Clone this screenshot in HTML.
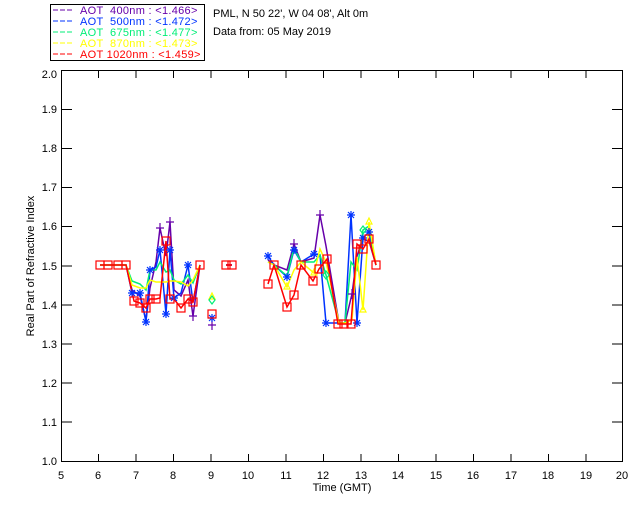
<!DOCTYPE html>
<html><head><meta charset="utf-8"><style>
html,body{margin:0;padding:0;background:#fff;}
svg{display:block;font-family:"Liberation Sans",sans-serif;}
.lg{white-space:pre;letter-spacing:0.3px;}
</style></head><body>
<svg width="640" height="512" viewBox="0 0 640 512" xmlns="http://www.w3.org/2000/svg">
<defs>
<g id="ast"><path d="M-4 0h8M0-4v8M-3-3l6 6M-3 3l6-6" stroke="#0033ff" stroke-width="1.2" fill="none"/></g>
<g id="pl"><path d="M-4 0h8M0-5v10" stroke="#6600aa" stroke-width="1.2" fill="none"/></g>
</defs>
<rect width="640" height="512" fill="#fff"/>
<rect x="50.5" y="4.5" width="154" height="56" fill="none" stroke="#000"/>
<g font-size="11" class="lg">
<line x1="53" y1="10" x2="73" y2="10" stroke="#6600aa" stroke-dasharray="5,2"/>
<text x="80" y="14" fill="#6600aa" xml:space="preserve">AOT  400nm : &lt;1.466&gt;</text>
<line x1="53" y1="21" x2="73" y2="21" stroke="#0033ff" stroke-dasharray="5,2"/>
<text x="80" y="25" fill="#0033ff" xml:space="preserve">AOT  500nm : &lt;1.472&gt;</text>
<line x1="53" y1="32" x2="73" y2="32" stroke="#00ee77" stroke-dasharray="5,2"/>
<text x="80" y="36" fill="#00ee77" xml:space="preserve">AOT  675nm : &lt;1.477&gt;</text>
<line x1="53" y1="43" x2="73" y2="43" stroke="#ffff00" stroke-dasharray="5,2"/>
<text x="80" y="47" fill="#ffff00" xml:space="preserve">AOT  870nm : &lt;1.473&gt;</text>
<line x1="53" y1="54" x2="73" y2="54" stroke="#ff0000" stroke-dasharray="5,2"/>
<text x="80" y="58" fill="#ff0000" xml:space="preserve">AOT 1020nm : &lt;1.459&gt;</text>
</g>
<text x="213" y="17" font-size="11">PML, N 50 22', W 04 08', Alt 0m</text>
<text x="213" y="35" font-size="11">Data from: 05 May 2019</text>
<rect x="61.5" y="70.5" width="561" height="391" fill="none" stroke="#000"/>
<g stroke="#000">
<path d="M98.5 461v-7M136 461v-7M173.5 461v-7M211 461v-7M248.5 461v-7M286 461v-7M323.5 461v-7M361 461v-7M398.5 461v-7M436 461v-7M473.5 461v-7M511 461v-7M548.5 461v-7M586 461v-7
M98.5 71v7M136 71v7M173.5 71v7M211 71v7M248.5 71v7M286 71v7M323.5 71v7M361 71v7M398.5 71v7M436 71v7M473.5 71v7M511 71v7M548.5 71v7M586 71v7
M62 109.5h10M62 148.5h10M62 187.5h10M62 226.5h10M62 266h10M62 305h10M62 344h10M62 383h10M62 422h10
M622 109.5h-10M622 148.5h-10M622 187.5h-10M622 226.5h-10M622 266h-10M622 305h-10M622 344h-10M622 383h-10M622 422h-10"/>
</g>
<g font-size="11" text-anchor="middle">
<text x="61" y="479">5</text><text x="98" y="479">6</text><text x="136" y="479">7</text><text x="173" y="479">8</text><text x="211" y="479">9</text><text x="248" y="479">10</text><text x="286" y="479">11</text><text x="323" y="479">12</text><text x="361" y="479">13</text><text x="398" y="479">14</text><text x="436" y="479">15</text><text x="473" y="479">16</text><text x="511" y="479">17</text><text x="548" y="479">18</text><text x="586" y="479">19</text><text x="622" y="479">20</text>
</g>
<g font-size="11" text-anchor="end">
<text x="57" y="78">2.0</text><text x="57" y="113">1.9</text><text x="57" y="152">1.8</text><text x="57" y="191">1.7</text><text x="57" y="230">1.6</text><text x="57" y="270">1.5</text><text x="57" y="309">1.4</text><text x="57" y="348">1.3</text><text x="57" y="387">1.2</text><text x="57" y="426">1.1</text><text x="57" y="465">1.0</text>
</g>
<text x="342" y="491" font-size="11" text-anchor="middle">Time (GMT)</text>
<text transform="translate(34,266) rotate(-90)" font-size="11" text-anchor="middle">Real Part of Refractive Index</text>
<g fill="none" stroke-width="1.5">
<polyline stroke="#6600aa" points="100,265 108,265 118,265 126,265 132,290 140,296 146,320 150,288 156,262 160,228 166,256 170,222 174,290 181,296 188,280 193,316 200,265"/>
<polyline stroke="#6600aa" points="226,265 232,265"/>
<polyline stroke="#6600aa" points="268,260 274,265 287,270 294,244 301,262 314,258 320,215 326,246 339,323 345,323 352,294 357,256 363,239 369,241 376,265"/>
<polyline stroke="#0033ff" points="100,265 108,265 118,265 126,265 132,293 140,293 146,322 150,270 156,267 160,250 166,314 170,250 174,298 181,293 188,265 193,302 200,265"/>
<polyline stroke="#0033ff" points="226,265 232,265"/>
<polyline stroke="#0033ff" points="268,256 274,265 287,277 294,250 301,262 314,254 320,255 326,323 339,323 345,323 351,215 357,323 363,238 369,232 376,265"/>
<polyline stroke="#00ee77" points="100,265 108,265 118,265 126,265 132,281 140,284 146,290 150,270 156,270 160,262 166,272 170,270 174,280 181,284 188,275 193,283 200,265"/>
<polyline stroke="#00ee77" points="268,262 274,265 287,276 294,248 301,262 314,262 320,255 326,275 339,323 345,323 351,262 357,270 363,230 369,226 376,265"/>
<polyline stroke="#ffff00" points="100,265 108,265 118,265 126,265 132,285 140,288 146,288 150,280 156,282 160,282 166,282 170,281 174,281 181,282 188,286 193,280 200,265"/>
<polyline stroke="#ffff00" points="268,262 274,265 287,287 294,270 301,262 314,273 320,249 326,262 339,323 345,323 352,320 357,257 363,310 369,222 376,265"/>
<polyline stroke="#ff0000" points="100,265 108,265 118,265 126,265 134,301 140,303 146,308 150,299 156,299 160,298 166,241 170,299 174,299 181,308 188,299 193,302 200,265"/>
<polyline stroke="#ff0000" points="226,265 232,265"/>
<polyline stroke="#ff0000" points="268,284 274,265 287,307 294,295 301,265 313,281 319,269 327,259 338,324 344,324 351,324 357,244 363,249 369,239 376,265"/>
</g>
<g>
<use href="#pl" x="212" y="325"/><use href="#pl" x="160" y="228"/><use href="#pl" x="170" y="222"/><use href="#pl" x="193" y="316"/><use href="#pl" x="320" y="215"/><use href="#pl" x="294" y="244"/><use href="#pl" x="352" y="294"/>
<use href="#ast" x="212" y="318"/><use href="#ast" x="146" y="322"/><use href="#ast" x="166" y="314"/><use href="#ast" x="150" y="270"/><use href="#ast" x="160" y="250"/><use href="#ast" x="170" y="250"/><use href="#ast" x="188" y="265"/><use href="#ast" x="132" y="293"/><use href="#ast" x="140" y="293"/><use href="#ast" x="174" y="298"/>
<use href="#ast" x="268" y="256"/><use href="#ast" x="287" y="277"/><use href="#ast" x="294" y="250"/><use href="#ast" x="314" y="254"/><use href="#ast" x="326" y="323"/><use href="#ast" x="351" y="215"/><use href="#ast" x="357" y="323"/><use href="#ast" x="363" y="238"/><use href="#ast" x="369" y="232"/>
</g>
<g fill="none" stroke="#ffff00" stroke-width="1.2"><path d="M212 293l3 6h-6z M287 283l3 6h-6z M314 269l3 6h-6z M363 306l3 6h-6z M369 218l3 6h-6z"/></g>
<g fill="none" stroke="#00ee77" stroke-width="1.2"><path d="M212 296l3 4-3 4-3-4z M326 271l3 4-3 4-3-4z M363 226l3 4-3 4-3-4z"/></g>
<g fill="none" stroke="#ff0000" stroke-width="1.2">
<rect x="96" y="261" width="8" height="8"/><rect x="104" y="261" width="8" height="8"/><rect x="114" y="261" width="8" height="8"/><rect x="122" y="261" width="8" height="8"/><rect x="130" y="297" width="8" height="8"/><rect x="136" y="299" width="8" height="8"/><rect x="142" y="304" width="8" height="8"/><rect x="146" y="295" width="8" height="8"/><rect x="152" y="295" width="8" height="8"/><rect x="162" y="237" width="8" height="8"/><rect x="166" y="295" width="8" height="8"/><rect x="177" y="304" width="8" height="8"/><rect x="184" y="295" width="8" height="8"/><rect x="189" y="298" width="8" height="8"/><rect x="196" y="261" width="8" height="8"/><rect x="208" y="310" width="8" height="8"/><rect x="222" y="261" width="8" height="8"/><rect x="228" y="261" width="8" height="8"/>
<rect x="264" y="280" width="8" height="8"/><rect x="270" y="261" width="8" height="8"/><rect x="283" y="303" width="8" height="8"/><rect x="290" y="291" width="8" height="8"/><rect x="297" y="261" width="8" height="8"/><rect x="309" y="277" width="8" height="8"/><rect x="315" y="265" width="8" height="8"/><rect x="323" y="255" width="8" height="8"/><rect x="334" y="320" width="8" height="8"/><rect x="340" y="320" width="8" height="8"/><rect x="347" y="320" width="8" height="8"/><rect x="353" y="240" width="8" height="8"/><rect x="359" y="245" width="8" height="8"/><rect x="365" y="235" width="8" height="8"/><rect x="372" y="261" width="8" height="8"/>
</g>
</svg>
</body></html>
